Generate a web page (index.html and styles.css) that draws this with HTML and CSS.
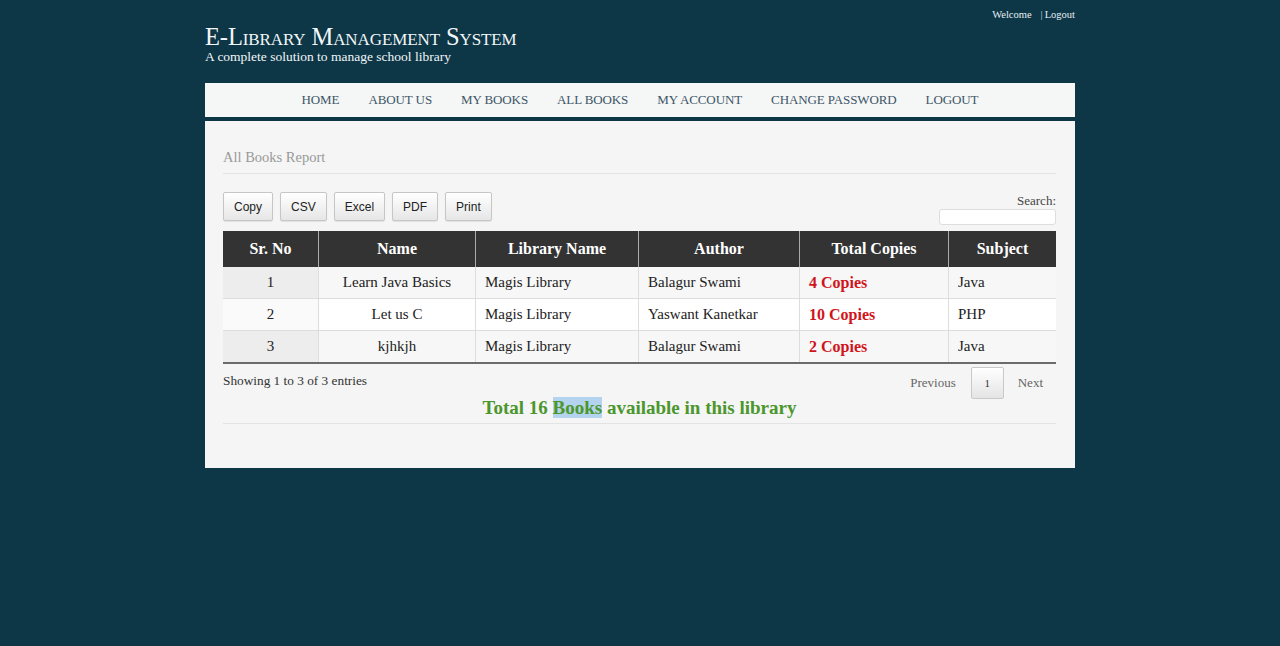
FILE: index.html
```html
<!DOCTYPE html>
<html>
<head>
<meta charset="utf-8">
<link rel="stylesheet" href="styles.css">
</head>
<body>
<div class="wrap">
  <header class="top">
    <div class="brand">
      <div class="title">E-Library Management System</div>
      <div class="tagline">A complete solution to manage school library</div>
    </div>
    <div class="userbar"><span>Welcome</span><span class="sep">|</span><span>Logout</span></div>
  </header>
  <nav class="menu">
    <a>HOME</a><a>ABOUT US</a><a>MY BOOKS</a><a>ALL BOOKS</a><a>MY ACCOUNT</a><a>CHANGE PASSWORD</a><a>LOGOUT</a>
  </nav>
  <main class="panel">
    <h2 class="report">All Books Report</h2>
    <div class="tools">
      <div class="btns">
        <button class="btn">Copy</button><button class="btn">CSV</button><button class="btn">Excel</button><button class="btn">PDF</button><button class="btn">Print</button>
      </div>
      <div class="search">
        <label>Search:</label>
        <input type="text">
      </div>
    </div>
    <table class="grid">
      <thead>
        <tr><th class="c1">Sr. No</th><th class="c2">Name</th><th class="c3">Library Name</th><th class="c4">Author</th><th class="c5">Total Copies</th><th class="c6">Subject</th></tr>
      </thead>
      <tbody>
        <tr class="odd"><td class="ctr sorted">1</td><td class="ctr">Learn Java Basics</td><td>Magis Library</td><td>Balagur Swami</td><td class="red">4 Copies</td><td>Java</td></tr>
        <tr class="even"><td class="ctr sorted">2</td><td class="ctr">Let us C</td><td>Magis Library</td><td>Yaswant Kanetkar</td><td class="red">10 Copies</td><td>PHP</td></tr>
        <tr class="odd"><td class="ctr sorted">3</td><td class="ctr">kjhkjh</td><td>Magis Library</td><td>Balagur Swami</td><td class="red">2 Copies</td><td>Java</td></tr>
      </tbody>
    </table>
    <div class="foot">
      <div class="info">Showing 1 to 3 of 3 entries</div>
      <div class="pager"><span class="pg">Previous</span><span class="cur">1</span><span class="pg">Next</span></div>
    </div>
    <p class="total">Total 16 <span class="sel">Books</span> available in this library</p>
    <hr class="rule">
  </main>
</div>
</body>
</html>
```

FILE: styles.css
```css
html, body { margin: 0; padding: 0; }
body {
  background: #0d3647;
  font-family: "Liberation Serif", "DejaVu Serif", serif;
  color: #222;
  height: 646px;
  overflow: hidden;
}
.wrap { width: 870px; margin: 0 auto; }
.top {
  height: 83px;
  display: flex;
  justify-content: space-between;
  align-items: flex-start;
}
.brand { padding-top: 23px; color: #f2f6f8; }
.title {
  font-size: 24.5px;
  font-variant: small-caps;
  line-height: 28px;
  letter-spacing: -0.1px;
}
.tagline { font-size: 13.5px; line-height: 14px; margin-top: -1px; }
.userbar {
  padding-top: 9px;
  font-size: 10.5px;
  color: #e6eef2;
  display: flex;
  gap: 5px;
}
.userbar .sep { margin-left: 4px; margin-right: -3px; color: #c9d5da; }
.menu {
  height: 34px;
  background: #f5f6f6;
  display: flex;
  justify-content: center;
  align-items: center;
  gap: 29px;
  margin-bottom: 4px;
  padding-left: 0;
}
.menu a {
  font-size: 13px;
  color: #3c5566;
  letter-spacing: -0.1px;
}
.panel {
  background: #f4f5f4;
  padding: 28px 19px 44px 18px;
}
.report {
  margin: 0;
  font-weight: normal;
  font-size: 14.5px;
  color: #9a9a9a;
  padding-bottom: 7px;
  border-bottom: 1px solid #e2e3e2;
}
.tools {
  display: flex;
  justify-content: space-between;
  margin-top: 18px;
  height: 39px;
}
.btns { display: flex; gap: 7px; }
.btn {
  font-family: "Liberation Sans", Arial, sans-serif;
  font-size: 12px;
  color: #222;
  height: 29px;
  padding: 0 10px;
  border: 1px solid #c6c6c6;
  border-radius: 2px;
  background: linear-gradient(#ffffff, #e6e6e6);
  box-shadow: 0 1px 1px rgba(0,0,0,0.08);
}
.search { display: flex; flex-direction: column; align-items: flex-end; padding-top: 1px; }
.search label { font-size: 13px; color: #444; line-height: 15px; }
.search input {
  width: 115px;
  height: 14px;
  margin-top: 1px;
  border: 1px solid #ddd;
  border-radius: 3px;
  background: #fff;
  padding: 0;
}
.grid {
  width: 100%;
  border-collapse: collapse;
  border-bottom: 2px solid #6b6b6b;
}
.grid th {
  background: #333333;
  color: #fff;
  font-size: 16px;
  font-weight: bold;
  height: 36px;
  padding: 0 8px;
  border-left: 1px solid #aaa;
  border-right: 1px solid #aaa;
}
.grid th:first-child { border-left: 0; }
.grid th:last-child { border-right: 0; }
.c1 { width: 79px; }
.c2 { width: 140px; }
.c3 { width: 146px; }
.c4 { width: 144px; }
.c5 { width: 132px; }
.grid td {
  font-size: 15px;
  height: 31px;
  padding: 0 9px;
  border: 1px solid #ddd;
  border-top: 0;
  color: #222;
}
.grid td:first-child { border-left: 0; }
.grid td:last-child { border-right: 0; }
.grid tbody tr:last-child td { border-bottom: 0; }
.grid .ctr { text-align: center; }
.odd td { background: #f7f7f7; }
.even td { background: #ffffff; }
.odd td.sorted { background: #ededed; }
.even td.sorted { background: #fafafa; }
.grid td.red { color: #d0141b; font-weight: bold; font-size: 16px; }
.foot {
  display: flex;
  justify-content: space-between;
  align-items: flex-start;
  margin-top: 3px;
}
.info { font-size: 13.3px; color: #333; padding-top: 6px; }
.pager { display: flex; align-items: center; gap: 0; padding-right: 13px; }
.pg { font-size: 13px; color: #666; }
.cur {
  width: 31px;
  height: 30px;
  margin: 0 14px 0 15px;
  border: 1px solid #c9c9c9;
  border-radius: 2px;
  background: linear-gradient(#ffffff, #e4e4e4);
  display: flex;
  align-items: center;
  justify-content: center;
  font-size: 11px;
  color: #333;
}
.total {
  margin: -2px 0 0;
  text-align: center;
  color: #4c962e;
  font-weight: bold;
  font-size: 19px;
  line-height: 22px;
}
.sel { background: #b4d3ef; }
.rule { border: 0; border-top: 1px solid #e2e3e2; margin: 4px 0 0; }
```
